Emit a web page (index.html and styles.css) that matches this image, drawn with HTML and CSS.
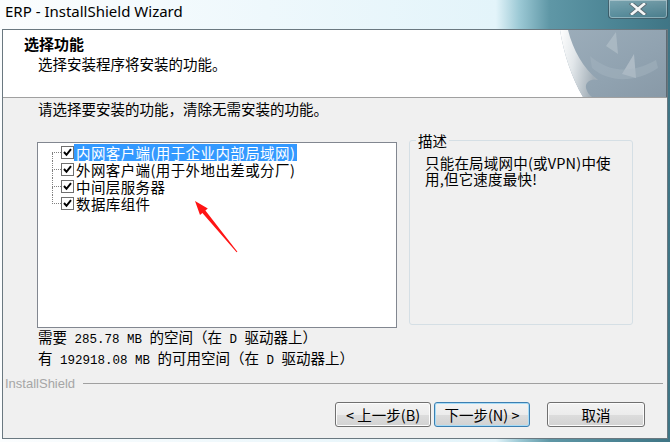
FILE: index.html
```html
<!DOCTYPE html>
<html lang="zh-CN">
<head>
  <meta charset="UTF-8" />
  <title>ERP - InstallShield Wizard</title>
  <link rel="stylesheet" href="styles.css">
</head>
<body>
  <div class="window">
    <div class="titlebar">
      <span class="caption">ERP - InstallShield Wizard</span>
      <span class="close">
        <svg width="18" height="12" viewBox="0 0 18 12">
          <path d="M3 1 L15 11 M15 1 L3 11" stroke="#5b6a72" stroke-width="4.4" stroke-linecap="square" fill="none"/>
          <path d="M3 1 L15 11 M15 1 L3 11" stroke="#f4f6f7" stroke-width="2.6" stroke-linecap="square" fill="none"/>
        </svg>
      </span>
    </div>

    <div class="client">
      <div class="header">
        <div class="header-text">
          <h1>选择功能</h1>
          <p>选择安装程序将安装的功能。</p>
        </div>
        <div class="banner">
          <svg width="109" height="67" viewBox="0 0 109 67">
            <defs>
              <linearGradient id="bg" x1="0" y1="0" x2="1" y2="1">
                <stop offset="0" stop-color="#9cadba"/>
                <stop offset="0.6" stop-color="#90a2b0"/>
                <stop offset="1" stop-color="#8899a7"/>
              </linearGradient>
              <linearGradient id="curl" x1="0" y1="0" x2="1" y2="0.3">
                <stop offset="0" stop-color="#ffffff"/>
                <stop offset="0.45" stop-color="#e2e7ea"/>
                <stop offset="1" stop-color="#a3afb8"/>
              </linearGradient>
            </defs>
            <rect width="109" height="67" fill="url(#bg)"/>
            <path d="M48 16 L58 2 L60 24 Z" fill="#b9c6ce" opacity="0.55"/>
            <path d="M64 44 L76 24 L78 48 Z" fill="#c6d0d7" opacity="0.55"/>
            <path d="M32 26 C48 40 70 46 98 30 L100 38 C76 54 50 52 34 38 Z" fill="#a7b6c1" opacity="0.45"/>
            <path d="M0 0 L2 0 C6 25 14 48 25 67 L0 67 Z" fill="#ffffff"/>
            <path d="M2 0 L10 0 C15 20 25 38 40 50 C33 48 27 52 28 58 C29 62 31 65 34 67 L25 67 C14 48 6 25 2 0 Z" fill="url(#curl)"/>
            <rect x="108" y="0" width="1" height="67" fill="#5d6a73"/>
          </svg>
        </div>
      </div>

      <div class="content">
        <p class="intro">请选择要安装的功能，清除无需安装的功能。</p>

        <div class="select-row">
          <div class="tree">
            <ul>
              <li class="first">
                <span class="branch"><i></i><i></i></span>
                <span class="check"><svg width="11" height="11" viewBox="0 0 11 11"><path d="M2 5 L4.5 7.8 L9 2.2" stroke="#000" stroke-width="2" fill="none"/></svg></span>
                <span class="label selected">内网客户端(用于企业内部局域网)</span>
              </li>
              <li>
                <span class="branch"><i></i><i></i></span>
                <span class="check"><svg width="11" height="11" viewBox="0 0 11 11"><path d="M2 5 L4.5 7.8 L9 2.2" stroke="#000" stroke-width="2" fill="none"/></svg></span>
                <span class="label">外网客户端(用于外地出差或分厂)</span>
              </li>
              <li>
                <span class="branch"><i></i><i></i></span>
                <span class="check"><svg width="11" height="11" viewBox="0 0 11 11"><path d="M2 5 L4.5 7.8 L9 2.2" stroke="#000" stroke-width="2" fill="none"/></svg></span>
                <span class="label">中间层服务器</span>
              </li>
              <li class="last">
                <span class="branch"><i></i><i></i></span>
                <span class="check"><svg width="11" height="11" viewBox="0 0 11 11"><path d="M2 5 L4.5 7.8 L9 2.2" stroke="#000" stroke-width="2" fill="none"/></svg></span>
                <span class="label">数据库组件</span>
              </li>
            </ul>
            <svg class="arrow" width="358" height="184" viewBox="0 0 358 184">
              <polygon points="157,58 169.8,65.6 167.4,67.5 199.4,108.7 198.6,109.3 164.4,70.1 162,72" fill="#ff1414"/>
            </svg>
          </div>

          <fieldset class="desc">
            <legend>描述</legend>
            <p>只能在局域网中(或VPN)中使<br>用,但它速度最快!</p>
          </fieldset>
        </div>

        <p class="space">需要<span class="mono"> 285.78 MB </span>的空间（在<span class="mono"> D </span>驱动器上）</p>
        <p class="space">有<span class="mono"> 192918.08 MB </span>的可用空间（在<span class="mono"> D </span>驱动器上）</p>
      </div>

      <div class="brand-rule">
        <span>InstallShield</span>
        <i></i>
      </div>

      <div class="buttons">
        <button type="button" class="btn">&lt; 上一步(B)</button>
        <button type="button" class="btn default">下一步(N) &gt;</button>
        <button type="button" class="btn cancel">取消</button>
      </div>
    </div>
  </div>
</body>
</html>
```

FILE: styles.css
```css
:root {
  --face: #f0f0f0;
  --rule: #a0a0a0;
  --cjk: "Noto Sans CJK SC", "Noto Sans", sans-serif;
}
* { box-sizing: border-box; }
html, body {
  margin: 0;
  padding: 0;
}
body {
  width: 670px;
  height: 442px;
  overflow: hidden;
  font-family: var(--cjk);
  font-size: 14.5px;
  color: #000;
}
.window {
  height: 442px;
  display: flex;
  flex-direction: column;
  background: linear-gradient(to right, #fbfdfe 0, #eef8fc 40%, #e3f4fa 74%, #9cc9d5 77.5%, #5f97a6 82%, #4b8494 92%, #3f7585 100%);
}
.titlebar {
  height: 29px;
  display: flex;
  justify-content: space-between;
  align-items: flex-start;
}
.caption {
  font-family: "Noto Sans", sans-serif;
  font-size: 15px;
  margin: 1px 0 0 5px;
  color: #000;
}
.close {
  width: 60px;
  height: 19px;
  margin-right: 2px;
  display: flex;
  align-items: center;
  justify-content: center;
  border: 1px solid rgba(30, 50, 60, 0.55);
  border-top: none;
  border-radius: 0 0 4px 4px;
  background: linear-gradient(rgba(255,255,255,0.25), rgba(255,255,255,0.05));
  box-shadow: inset 0 0 0 1px rgba(255,255,255,0.35);
}
.client {
  flex: 1;
  margin: 0 2px 3px 2px;
  border: 1px solid #6a7880;
  background: var(--face);
  display: flex;
  flex-direction: column;
}
.header {
  height: 68px;
  background: #fff;
  border-bottom: 1px solid var(--rule);
  display: flex;
}
.header-text { flex: 1; }
.header h1 {
  margin: 0;
  padding: 4px 0 0 21px;
  font-size: 15px;
  font-weight: bold;
  line-height: 19px;
}
.header p {
  margin: 0;
  padding: 1px 0 0 35px;
  line-height: 19px;
}
.banner { width: 109px; height: 67px; }
.banner svg { display: block; }
.content {
  padding: 2px 0 0 34px;
}
.intro {
  margin: 0 0 0 1px;
  line-height: 18px;
}
.select-row {
  display: flex;
  align-items: flex-start;
  gap: 12px;
}
.tree {
  position: relative;
  width: 360px;
  height: 186px;
  margin-top: 24px;
  background: #fff;
  border: 1px solid #828790;
}
.tree ul {
  list-style: none;
  margin: 0;
  padding: 1px 0 0 14px;
}
.tree li {
  display: flex;
  align-items: center;
  height: 17px;
}
.branch {
  width: 9px;
  align-self: stretch;
  display: flex;
  flex-direction: column;
}
.branch i {
  flex: 1;
  border-left: 1px dotted #808080;
}
.branch i:first-child { border-bottom: 1px dotted #808080; }
.tree li.first .branch i:first-child { border-left: none; }
.tree li.last .branch i:last-child { border-left: none; }
.check {
  width: 13px;
  height: 13px;
  border: 1px solid #6f6f6f;
  background: #fff;
  display: flex;
}
.label {
  padding: 0 2px 0 2px;
  line-height: 17px;
  letter-spacing: 0.4px;
  white-space: nowrap;
}
.label.selected {
  background: #3399ff;
  color: #fff;
}
.arrow {
  position: absolute;
  left: 0;
  top: 0;
  pointer-events: none;
}
.desc {
  width: 224px;
  height: 193px;
  margin: 14px 0 0 0;
  padding: 0 0 0 15px;
  border: 1px solid #d5dfe5;
  border-radius: 3px;
}
.desc legend {
  padding: 0 2px;
  margin-left: -9px;
  line-height: 17px;
}
.desc p {
  margin: 6px 0 0 0;
  line-height: 16px;
  letter-spacing: 0.2px;
}
.space {
  margin: 0 0 0 1px;
  line-height: 18px;
  white-space: nowrap;
}
.space:first-of-type { margin-top: 1px; }
.mono {
  font-family: "Liberation Mono", monospace;
  font-size: 12.5px;
}
.brand-rule {
  display: flex;
  align-items: center;
  gap: 8px;
  margin: 5px 4px 0 2px;
  height: 16px;
}
.brand-rule span {
  font-family: "Liberation Sans", sans-serif;
  font-size: 13px;
  color: #a6a6a6;
}
.brand-rule i {
  flex: 1;
  border-top: 1px solid var(--rule);
}
.buttons {
  display: flex;
  justify-content: flex-end;
  padding: 11px 22px 0 0;
}
.btn {
  width: 96px;
  height: 25px;
  font-family: var(--cjk);
  font-size: 14.5px;
  line-height: 20px;
  padding: 0;
  color: #000;
  border: 1px solid #707070;
  border-radius: 3px;
  background: linear-gradient(#f3f3f3 0, #ececec 50%, #dddddd 51%, #d2d2d2 100%);
  box-shadow: inset 0 0 0 1px #fcfcfc;
}
.btn + .btn { margin-left: 3px; }
.btn.default {
  border-color: #3c7fb1;
  box-shadow: inset 0 0 0 1px #a7dcf7;
}
.btn.cancel {
  width: 98px;
  margin-left: 17px;
}
```
